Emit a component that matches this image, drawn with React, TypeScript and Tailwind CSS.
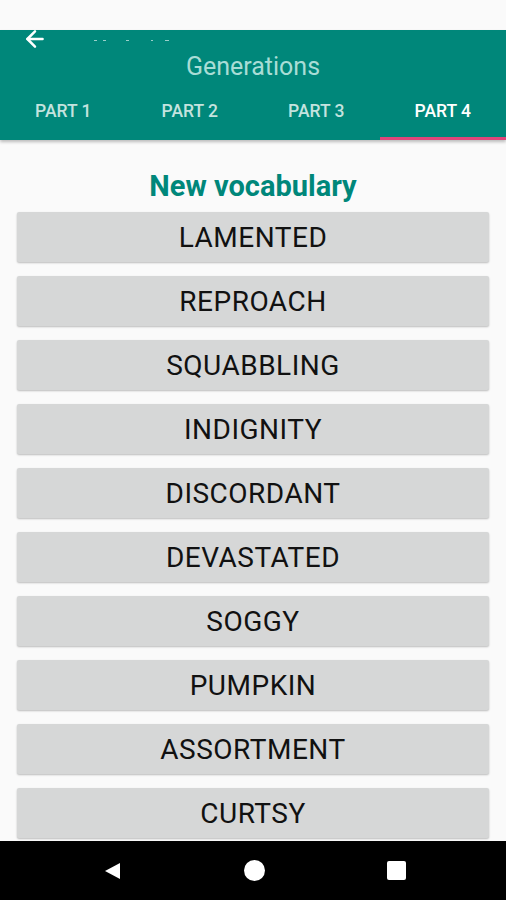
import { ArrowLeft } from 'lucide-react';

const words = [
  'LAMENTED',
  'REPROACH',
  'SQUABBLING',
  'INDIGNITY',
  'DISCORDANT',
  'DEVASTATED',
  'SOGGY',
  'PUMPKIN',
  'ASSORTMENT',
  'CURTSY',
];

const tabs = ['PART 1', 'PART 2', 'PART 3', 'PART 4'];

export default function App() {
  return (
    <div
      className="w-[506px] h-[900px] bg-[#fafafa] flex flex-col overflow-hidden"
      style={{ fontFamily: 'Roboto, "Liberation Sans", sans-serif' }}
    >
      {/* status bar */}
      <div className="h-[30px] shrink-0 bg-[#fafafa]" />

      {/* app bar */}
      <div className="bg-[#00877a] shrink-0 h-[110px] flex flex-col shadow-[0_2px_3px_rgba(0,0,0,0.25)] relative z-10">
        <div className="h-[20px] flex items-center pl-[22px] gap-[46px]">
          <ArrowLeft size={26} strokeWidth={2.3} className="text-white -mt-[2px]" />
          <div className="flex gap-[6px] items-center opacity-60">
            <span className="w-[3px] h-[1px] bg-white" />
            <span className="w-[3px] h-[1px] bg-white" />
            <span className="w-[3px] h-[1px] bg-white ml-[14px]" />
            <span className="w-[2px] h-[1px] bg-white ml-[16px]" />
            <span className="w-[4px] h-[1px] bg-white ml-[6px]" />
          </div>
        </div>
        <div className="h-[32px] flex items-center justify-center pt-[2px] text-[25px] text-[#a9ddd6]">
          Generations
        </div>
        <div className="flex-1 grid grid-cols-4">
          {tabs.map((t, i) => (
            <div key={t} className="flex flex-col">
              <div
                className={`flex-1 flex items-center justify-center pt-[4px] text-[17.5px] font-medium ${
                  i === 3 ? 'text-white' : 'text-[#c4e3df]'
                }`}
              >
                {t}
              </div>
              <div className={`h-[3px] ${i === 3 ? 'bg-[#e0457a]' : ''}`} />
            </div>
          ))}
        </div>
      </div>

      {/* content */}
      <div className="flex-1 flex flex-col px-[17px] pt-[30px] overflow-hidden">
        <div className="text-center text-[29px] font-bold text-[#00877a] leading-[32px] mb-[10px]">
          New vocabulary
        </div>
        <div className="flex flex-col gap-[14px]">
          {words.map((w) => (
            <div
              key={w}
              className="h-[50px] shrink-0 rounded-[2px] bg-[#d6d7d7] shadow-[0_1px_2px_rgba(0,0,0,0.25)] flex items-center justify-center pt-[2px] text-[28px] text-[#111] tracking-[0.5px]"
            >
              {w}
            </div>
          ))}
        </div>
      </div>

      {/* nav bar */}
      <div className="h-[59px] shrink-0 bg-black flex items-center justify-between pl-[102px] pr-[100px]">
        <svg width="20" height="20" viewBox="0 0 20 20">
          <path d="M18 2 L18 18 L3 10 Z" fill="white" />
        </svg>
        <div className="w-[21px] h-[21px] rounded-full bg-white" />
        <div className="w-[19px] h-[19px] rounded-[2px] bg-white" />
      </div>
    </div>
  );
}
